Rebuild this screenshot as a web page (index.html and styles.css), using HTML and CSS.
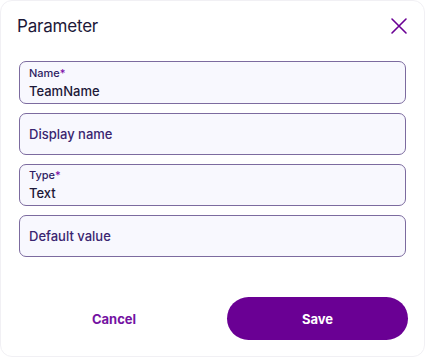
FILE: index.html
```html
<!DOCTYPE html>
<html lang="en">
<head>
  <meta charset="UTF-8">
  <meta name="viewport" content="width=device-width, initial-scale=1">
  <title>Parameter</title>
  <link rel="stylesheet" href="styles.css">
</head>
<body>

  <div class="dialog">
    <div class="dialog-header">
      <h1>Parameter</h1>
      <button type="button" class="close-btn" aria-label="Close">
        <svg width="18" height="18" viewBox="0 0 18 18">
          <path d="M2 2 L16 16 M16 2 L2 16" stroke="#6a0094" stroke-width="1.6" stroke-linecap="round" fill="none"/>
        </svg>
      </button>
    </div>

    <form class="fields">
      <label class="field">
        <span class="field-label">Name<span class="req">*</span></span>
        <span class="field-value">TeamName</span>
      </label>
      <label class="field">
        <span class="field-placeholder">Display name</span>
      </label>
      <label class="field">
        <span class="field-label">Type<span class="req">*</span></span>
        <span class="field-value">Text</span>
      </label>
      <label class="field">
        <span class="field-placeholder">Default value</span>
      </label>
    </form>

    <div class="actions">
      <button type="button" class="btn-cancel">Cancel</button>
      <button type="button" class="btn-save">Save</button>
    </div>
  </div>

</body>
</html>
```

FILE: styles.css
```css
body {
  margin: 0;
  font-family: 'Inter', 'Noto Sans', sans-serif;
  background: #ffffff;
}

.dialog {
  width: 425px;
  height: 357px;
  box-sizing: border-box;
  border: 1px solid #f1f0f4;
  border-radius: 12px;
  padding: 0 17px 0 18px;
  background: white;
}

.dialog-header {
  display: flex;
  justify-content: space-between;
  align-items: center;
  height: 50px;
}

h1 {
  margin: 0 0 0 -2px;
  font-size: 17px;
  font-weight: 400;
  letter-spacing: -0.2px;
  color: #1d1838;
}

.close-btn {
  background: none;
  border: none;
  padding: 0;
  margin-right: -1px;
  width: 18px;
  height: 18px;
  cursor: pointer;
}

.fields {
  display: flex;
  flex-direction: column;
  gap: 9px;
  margin-top: 10px;
  padding-right: 1px;
}

.field {
  display: flex;
  flex-direction: column;
  justify-content: center;
  box-sizing: border-box;
  height: 43px;
  padding: 0 9px;
  border: 1px solid #7c6b9f;
  border-radius: 7px;
  background: #f8f8fe;
}

.field + .field {
  height: 42px;
}

.field-label {
  font-size: 11px;
  font-weight: 500;
  color: #2e1c63;
  line-height: 14px;
}

.req {
  color: #7a0aa6;
}

.field-value {
  font-size: 13px;
  font-weight: 500;
  color: #1d1838;
  line-height: 18px;
  margin-top: 2px;
}

.field-placeholder {
  font-size: 13px;
  font-weight: 500;
  color: #3a2570;
}

.actions {
  display: flex;
  gap: 18px;
  margin-top: 40px;
  margin-right: -1px;
}

.btn-cancel,
.btn-save {
  font-family: inherit;
  font-size: 13px;
  font-weight: 700;
  height: 43px;
  border: none;
  cursor: pointer;
}

.btn-cancel {
  flex: 0 0 190px;
  background: none;
  color: #7412a2;
}

.btn-save {
  flex: 1;
  background: #6a0094;
  color: white;
  border-radius: 22px;
}
```
